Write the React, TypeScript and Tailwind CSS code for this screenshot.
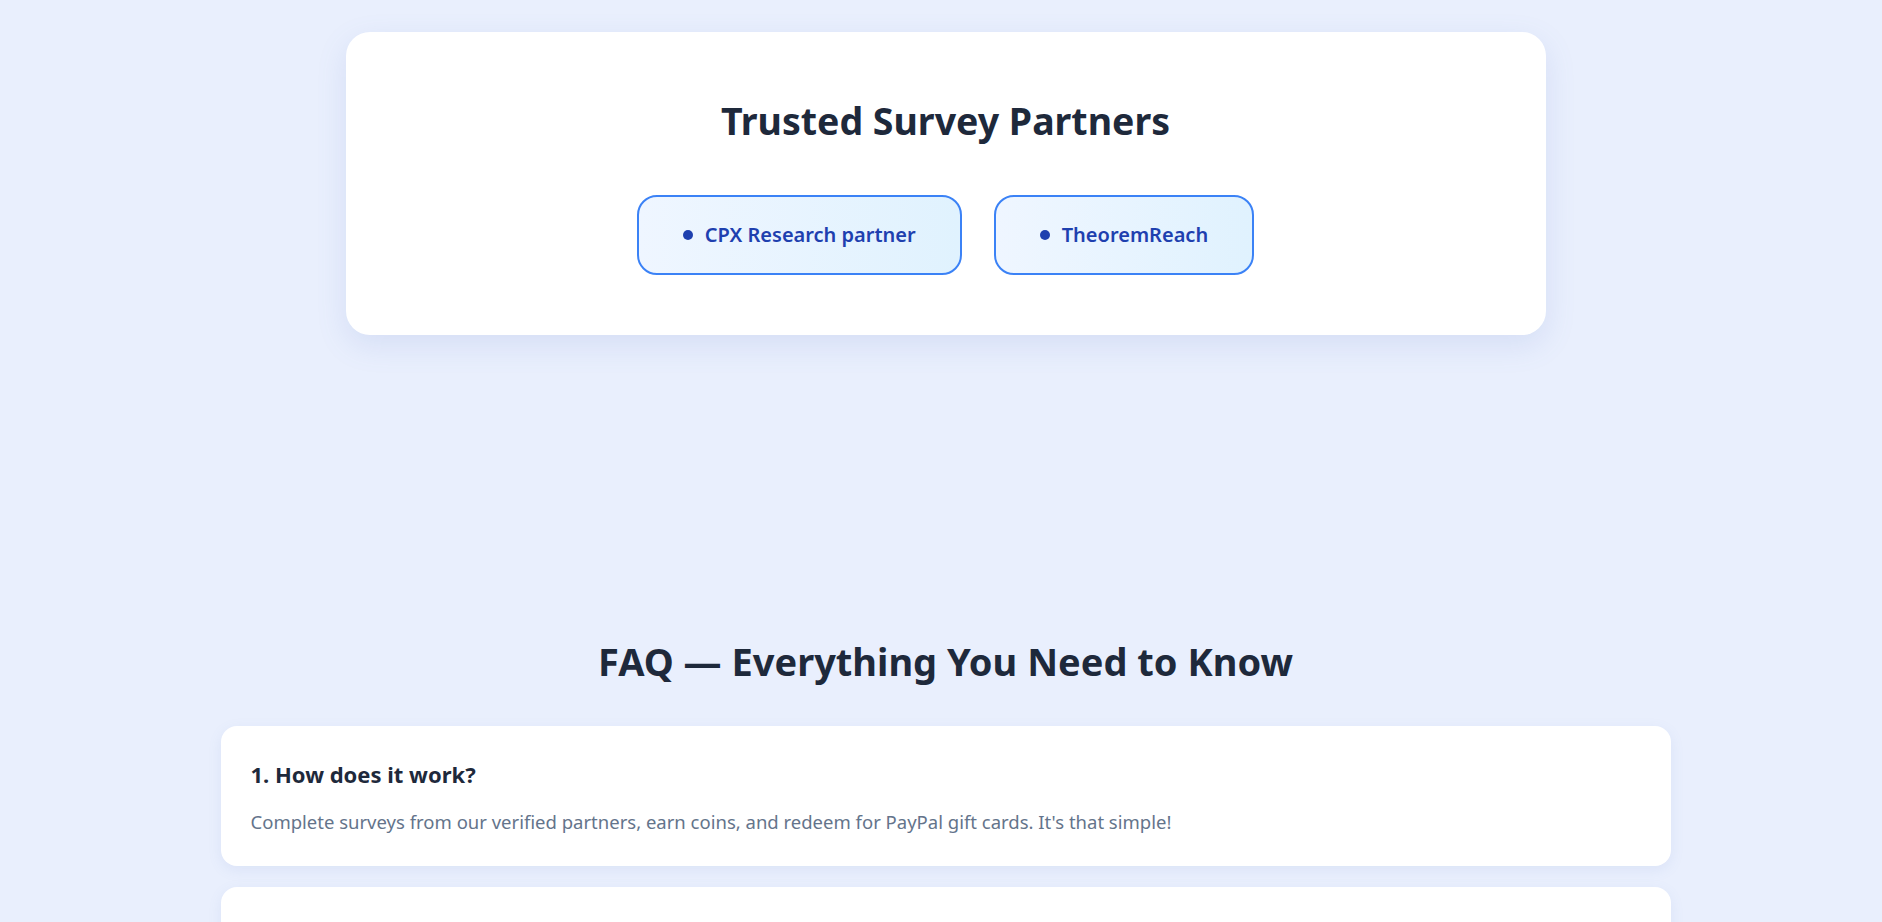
import React from 'react';

const partners = ['CPX Research partner', 'TheoremReach'];

const faqs = [
  {
    q: '1. How does it work?',
    a: "Complete surveys from our verified partners, earn coins, and redeem for PayPal gift cards. It's that simple!",
  },
  {
    q: '2. How much can I earn?',
    a: 'Earnings depend on the surveys available to you. Most surveys pay between a few cents and a few dollars.',
  },
];

export default function App() {
  return (
    <div className="min-h-screen bg-[#e9effd] font-['Segoe_UI','Noto_Sans',sans-serif] pl-[9px] pb-10">
      {/* partners */}
      <section className="pt-8">
        <div className="mx-auto w-[1200px] bg-white rounded-3xl shadow-[0_10px_30px_rgba(99,125,200,0.15)] pt-[66px] pb-[60px] flex flex-col items-center">
          <h2 className="text-[37.5px] leading-[1.2] font-bold text-[#1e293b]">Trusted Survey Partners</h2>
          <div className="mt-[52px] flex gap-8">
            {partners.map(p => (
              <div
                key={p}
                className="h-[80px] px-[44px] flex items-center gap-3 rounded-[20px] border-2 border-[#3b82f6] bg-gradient-to-r from-[#eff6ff] to-[#e0f2fe]"
              >
                <span className="w-[10px] h-[10px] rounded-full bg-[#1e40af]" />
                <span className="text-[20px] font-semibold text-[#1e40af]">{p}</span>
              </div>
            ))}
          </div>
        </div>
      </section>

      {/* faq */}
      <section className="mt-[304px]">
        <h2 className="text-center text-[38px] leading-[1.2] font-bold text-[#1e293b]">FAQ — Everything You Need to Know</h2>
        <div className="mx-auto mt-[41px] w-[1450px] flex flex-col gap-[21px]">
          {faqs.map(f => (
            <div key={f.q} className="bg-white rounded-2xl shadow-[0_4px_14px_rgba(99,125,200,0.1)] px-[30px] pt-[35px] pb-[29px]">
              <h3 className="text-[22px] leading-[1.2] font-bold text-[#1e293b]">{f.q}</h3>
              <p className="mt-[20px] text-[18.5px] leading-[1.6] text-[#64748b]">{f.a}</p>
            </div>
          ))}
        </div>
      </section>
    </div>
  );
}
